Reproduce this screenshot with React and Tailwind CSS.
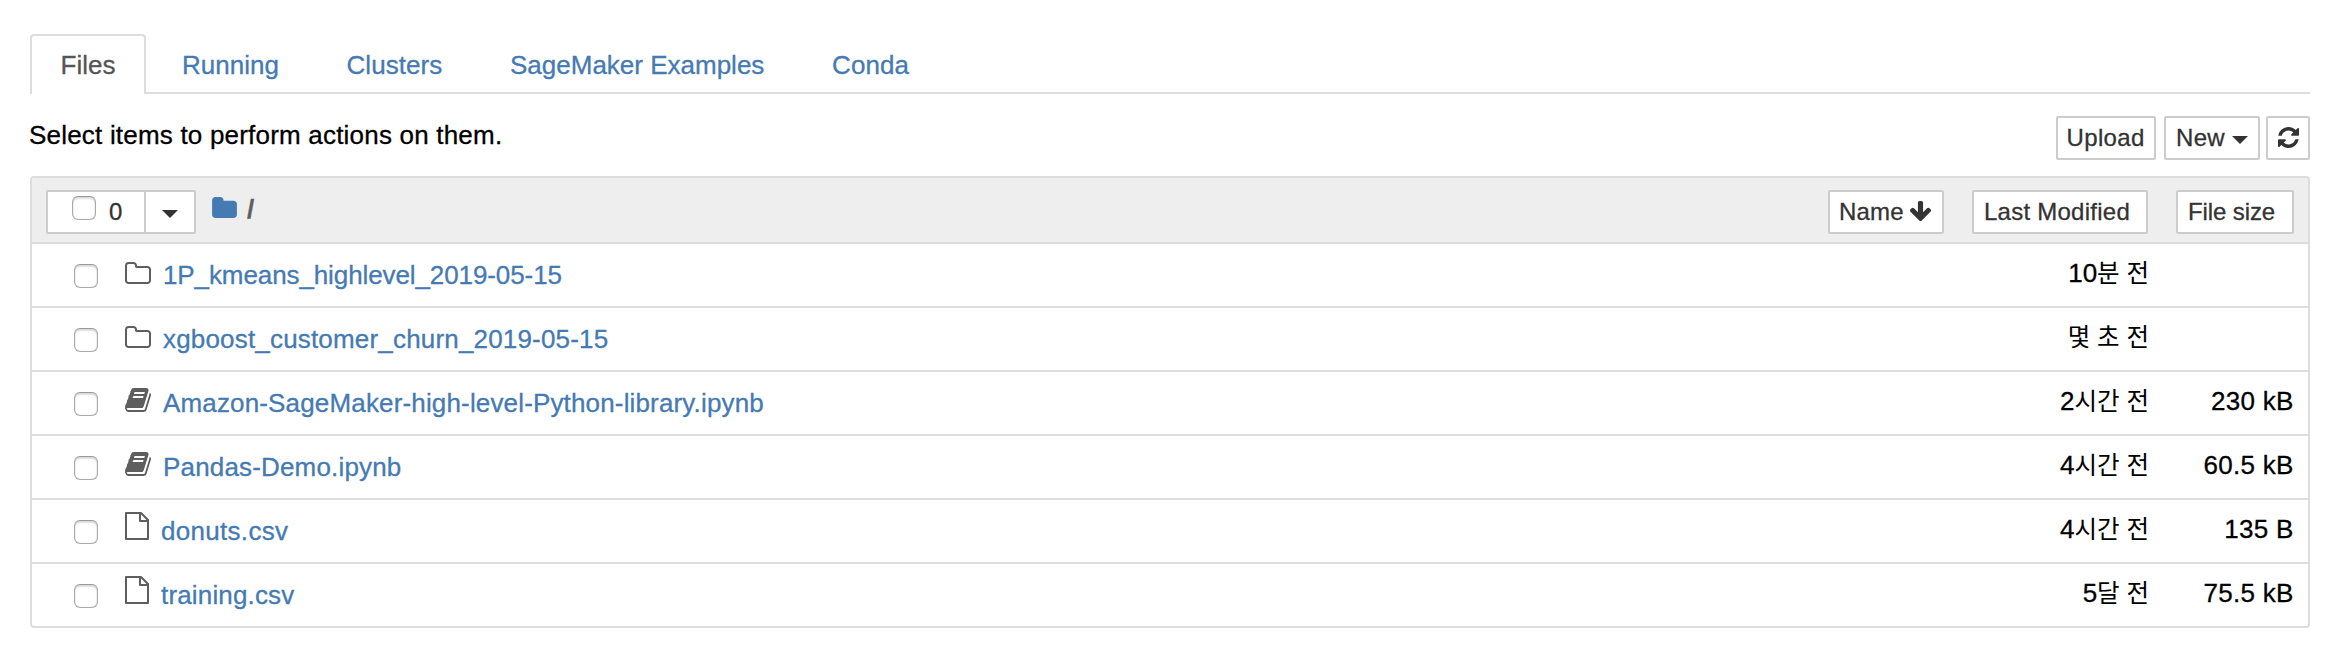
import React from "react";

const FOLDER =
  "M1664 608v704q0 92-66 158t-158 66h-1216q-92 0-158-66t-66-158v-960q0-92 66-158t158-66h320q92 0 158 66t66 158v32h672q92 0 158 66t66 158z";
const FOLDER_OPEN_AREA =
  "M1536 1312v-704q0-40-28-68t-68-28h-704q-40 0-68-28t-28-68v-64q0-40-28-68t-68-28h-320q-40 0-68 28t-28 68v960q0 40 28 68t68 28h1216q40 0 68-28t28-68z";
const BOOK =
  "M1639 478q40 57 18 129l-275 906q-19 64-76.5 107.5t-122.5 43.5h-923q-77 0-148.5-53.5t-99.5-131.5q-24-67-2-127 0-4 3-27t4-37q1-8-3-21.5t-3-19.5q2-11 8-21t16.5-23.5 16.5-23.5q23-38 45-91.5t30-91.5q3-10 .5-30t-.5-28q3-11 17-28t17-23q21-36 42-92t25-90q1-9-2.5-32t.5-28q4-13 22-30.5t22-22.5q19-26 42.5-84.5t27.5-96.5q1-8-3-25.5t-2-26.5q2-8 9-18t18-23 17-21q8-12 16.5-30.5t15-35 16-36 19.5-32 26.5-23.5 36-11.5 47.5 5.5l-1 3q38-9 51-9h761q74 0 114 56t18 130l-274 906q-36 119-71.5 153.5t-128.5 34.5h-869q-27 0-38 15-11 16-1 43 24 70 144 70h923q29 0 56-15.5t35-41.5l300-987q7-22 5-57 38 15 59 43zM575 480q-4 13 2 22.5t20 9.5h608q13 0 25.5-9.5t16.5-22.5l21-64q4-13-2-22.5t-20-9.5h-608q-13 0-25.5 9.5t-16.5 22.5zm-83 256q-4 13 2 22.5t20 9.5h608q13 0 25.5-9.5t16.5-22.5l21-64q4-13-2-22.5t-20-9.5h-608q-13 0-25.5 9.5t-16.5 22.5z";
const REFRESH =
  "M1511 1056q0 5-1 7-64 268-268 434.5t-478 166.5q-146 0-282.5-55t-243.5-157l-129 129q-19 19-45 19t-45-19-19-45v-448q0-26 19-45t45-19h448q26 0 45 19t19 45-19 45l-137 137q71 66 161 102t187 36q134 0 250-65t186-179q11-17 53-117 8-23 30-23h192q13 0 22.5 9.5t9.5 22.5zm25-800v448q0 26-19 45t-45 19h-448q-26 0-45-19t-19-45 19-45l138-138q-148-137-349-137-134 0-250 65t-186 179q-11 17-53 117-8 23-30 23h-199q-13 0-22.5-9.5t-9.5-22.5v-7q65-268 270-434.5t480-166.5q146 0 284 55.5t245 156.5l130-129q19-19 45-19t45 19 19 45z";
const ARROW_DOWN =
  "M1675 832q0 53-37 90l-651 652q-39 37-91 37-53 0-90-37l-651-652q-38-36-38-90 0-53 38-91l74-75q39-37 91-37 53 0 90 37l294 294v-704q0-52 38-90t90-38h128q52 0 90 38t38 90v704l294-294q37-37 90-37 52 0 91 37l75 75q37 39 37 91z";

function Caret({ className = "" }) {
  return (
    <svg className={`h-2 w-4 shrink-0 ${className}`} viewBox="0 0 16 8" fill="#333">
      <path d="M0 0h16l-8 8z" />
    </svg>
  );
}

function Checkbox({ className = "" }) {
  return (
    <span
      className={`block size-6 shrink-0 rounded-[6px] border border-[#aaa] border-t-[#999] bg-white shadow-[inset_0_2px_2px_rgba(0,0,0,0.13),inset_0_0_1px_rgba(0,0,0,0.3)] ${className}`}
    />
  );
}

function ItemIcon({ type }) {
  if (type === "folder") {
    return (
      <svg className="mt-[18px] h-[22px] w-[26px]" viewBox="0 128 1664 1408" fill="#5e5e5e" fillRule="evenodd">
        <path d={FOLDER + FOLDER_OPEN_AREA} />
      </svg>
    );
  }
  if (type === "notebook") {
    return (
      <svg className="mt-4 h-6 w-[26px]" viewBox="0 128 1664 1536" fill="#5e5e5e">
        <path d={BOOK} />
      </svg>
    );
  }
  return (
    <svg className="mt-3 h-7 w-6" viewBox="0 0 24 28" fill="none" stroke="#5e5e5e" strokeWidth="2" strokeLinejoin="round">
      <path d="M1 1h15l7 7v19H1z" />
      <path d="M15 1v8h8" />
    </svg>
  );
}

const TABS = [
  { label: "Running", cls: "w-[164.5px]" },
  { label: "Clusters", cls: "w-[163.5px] tracking-[0.05px]" },
  { label: "SageMaker Examples", cls: "w-[322px]" },
  { label: "Conda", cls: "tracking-[0.1px]" },
];

const ITEMS = [
  { type: "folder", name: "1P_kmeans_highlevel_2019-05-15", count: "10", unit: "분 전", size: "", cls: "pl-3 tracking-[-0.1px]" },
  { type: "folder", name: "xgboost_customer_churn_2019-05-15", count: "", unit: "몇 초 전", size: "", cls: "pl-3 tracking-[0.18px]" },
  { type: "notebook", name: "Amazon-SageMaker-high-level-Python-library.ipynb", count: "2", unit: "시간 전", size: "230 kB", cls: "pl-3 tracking-[0.155px]" },
  { type: "notebook", name: "Pandas-Demo.ipynb", count: "4", unit: "시간 전", size: "60.5 kB", cls: "pl-3 tracking-[0.17px]" },
  { type: "file", name: "donuts.csv", count: "4", unit: "시간 전", size: "135 B", cls: "pl-2.5 tracking-[0.3px]" },
  { type: "file", name: "training.csv", count: "5", unit: "달 전", size: "75.5 kB", cls: "pl-2.5 tracking-[0.16px]" },
];

const BTN =
  "flex h-11 shrink-0 whitespace-nowrap rounded-[2px] border-2 border-[#ccc] bg-white text-[24px] leading-[40px] text-[#333]";

export default function App() {
  return (
    <div className="h-[654px] w-[2334px] overflow-hidden bg-white pl-[30px] pr-6 pt-[34px] font-['Liberation_Sans','Noto_Sans_CJK_KR',sans-serif] text-[26px] text-black [-webkit-text-stroke:0.3px]">
      <nav className="flex h-[60px] text-[#457ab3]">
        <div className="h-[60px] w-[116px] shrink-0 rounded-t-[4px] border-2 border-b-0 border-[#ddd] pl-[28.5px] leading-[58px] text-[#555]">
          Files
        </div>
        <div className="flex grow border-b-2 border-[#ddd] pl-9 leading-[62px]">
          {TABS.map((t) => (
            <a key={t.label} className={`shrink-0 whitespace-nowrap ${t.cls}`}>
              {t.label}
            </a>
          ))}
        </div>
      </nav>

      <div className="flex h-[82px] justify-between pt-[22px]">
        <p className="-ml-px leading-[39px] tracking-[0.2px]">Select items to perform actions on them.</p>
        <div className="flex">
          <button className={`${BTN} w-[100px] pl-[8.5px] tracking-[0.35px]`}>Upload</button>
          <button className={`${BTN} ml-2 w-24 pl-[10px]`}>
            <span className="w-14 text-left tracking-[0.3px]">New</span>
            <Caret className="mt-[18px]" />
          </button>
          <button className={`${BTN} ml-1.5 w-11 pl-2.5`}>
            <svg className="mt-[9px] size-[21px]" viewBox="0 128 1536 1536" fill="#333">
              <path d={REFRESH} />
            </svg>
          </button>
        </div>
      </div>

      <section className="overflow-hidden rounded-[4px] border-2 border-[#ddd]">
        <header className="flex h-[66px] border-b-2 border-[#ddd] bg-[#eee] pl-3.5 pr-3.5 pt-3">
          <div className={`${BTN} w-[100px] rounded-r-none pl-6`}>
            <Checkbox className="mt-1" />
            <span className="pl-[13px] leading-[40px]">0</span>
          </div>
          <div className={`${BTN} -ml-0.5 w-[52px] rounded-l-none pl-4`}>
            <Caret className="mt-[18px]" />
          </div>
          <svg className="ml-4 mt-[7px] h-[21px] w-[25px] shrink-0" viewBox="0 128 1664 1408" fill="#457ab3">
            <path d={FOLDER} />
          </svg>
          <span className="pl-2.5 font-bold leading-[38px] text-[#5e5e5e]">/</span>
          <div className="grow" />
          <button className={`${BTN} w-[116px] pl-[9px]`}>
            <span className="w-[71px] text-left tracking-[0.2px]">Name</span>
            <svg className="mt-[9px] h-5 w-[21px]" viewBox="117 128 1558 1483" fill="#333">
              <path d={ARROW_DOWN} />
            </svg>
          </button>
          <button className={`${BTN} ml-7 w-44 pl-2.5 tracking-[0.25px]`}>Last Modified</button>
          <button className={`${BTN} ml-7 w-[118px] pl-2.5 tracking-[-0.1px]`}>File size</button>
        </header>

        <ul>
          {ITEMS.map((it) => (
            <li key={it.name} className="flex h-16 border-b-2 border-[#ddd] pl-[42px] pr-3.5 last:h-[62px] last:border-b-0">
              <Checkbox className="mt-5" />
              <span className="ml-[27px] w-[26px] shrink-0">
                <ItemIcon type={it.type} />
              </span>
              <a className={`grow whitespace-nowrap leading-[62px] text-[#457ab3] ${it.cls}`}>{it.name}</a>
              <span className="whitespace-nowrap leading-[58px]">
                {it.count}
                <span className="text-[24.5px] leading-none [-webkit-text-stroke:0px]">{it.unit}</span>
              </span>
              <span className="w-[145px] whitespace-nowrap pr-[0.5px] text-right leading-[58px] tracking-[0.25px]">{it.size}</span>
            </li>
          ))}
        </ul>
      </section>
    </div>
  );
}
